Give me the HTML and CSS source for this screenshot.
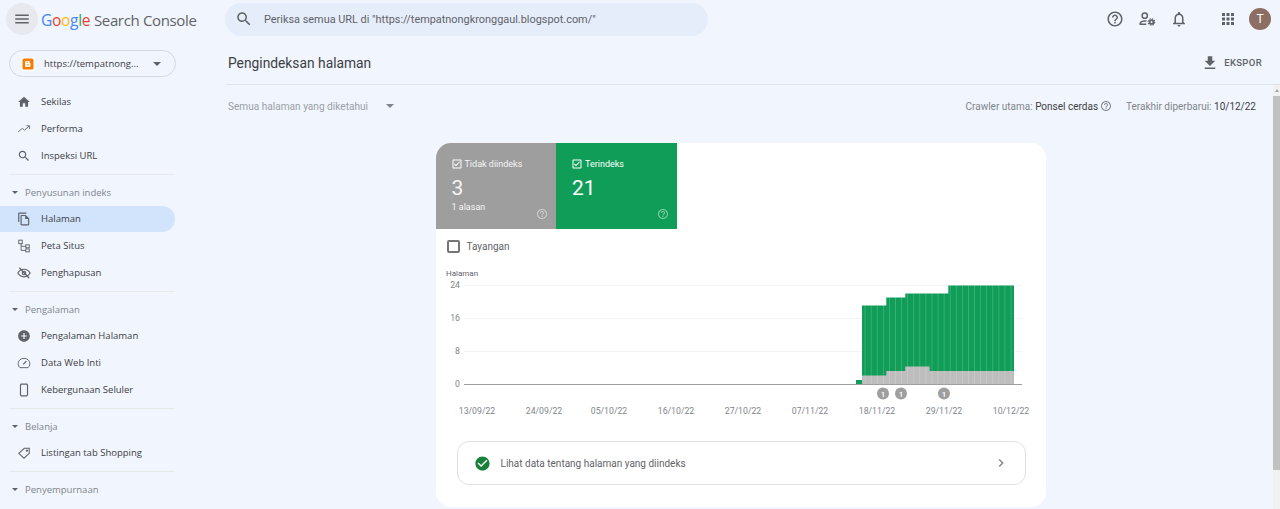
FILE: index.html
```html
<!DOCTYPE html>
<html lang="id">
<head>
    <meta charset="UTF-8">
    <meta name="viewport" content="width=device-width, initial-scale=1.0">
    <title>Pengindeksan halaman - Search Console</title>
    <link rel="stylesheet" href="styles.css">
</head>
<body>
    <svg class="defs" width="0" height="0">
        <symbol id="help" viewBox="0 0 24 24"><path d="M11 18h2v-2h-2v2zm1-16C6.48 2 2 6.48 2 12s4.48 10 10 10 10-4.48 10-10S17.52 2 12 2zm0 18c-4.41 0-8-3.59-8-8s3.59-8 8-8 8 3.59 8 8-3.59 8-8 8zm0-14c-2.21 0-4 1.79-4 4h2c0-1.1.9-2 2-2s2 .9 2 2c0 2-3 1.75-3 5h2c0-2.25 3-2.5 3-5 0-2.21-1.79-4-4-4z"/></symbol>
        <symbol id="tick" viewBox="0 0 24 24"><path d="M19 3H5c-1.1 0-2 .9-2 2v14c0 1.1.9 2 2 2h14c1.1 0 2-.9 2-2V5c0-1.1-.9-2-2-2zm0 16H5V5h14v14z"/><path d="M10 16.4l-4-4 1.4-1.4 2.6 2.6 6.6-6.6L18 8z"/></symbol>
    </svg>

    <header class="topbar">
        <div class="menu-btn">
            <svg class="icon-18" viewBox="0 0 24 24"><path d="M3 18h18v-2H3v2zm0-5h18v-2H3v2zm0-7v2h18V6H3z"/></svg>
        </div>
        <div class="logo">
            <span class="g-blue">G</span><span class="g-red">o</span><span class="g-yellow">o</span><span class="g-blue">g</span><span class="g-green">l</span><span class="g-red">e</span>
            <span class="logo-name">Search Console</span>
        </div>
        <div class="search">
            <svg class="icon-18" viewBox="0 0 24 24"><path d="M15.5 14h-.79l-.28-.27C15.41 12.59 16 11.11 16 9.5 16 5.91 13.09 3 9.5 3S3 5.91 3 9.5 5.91 16 9.5 16c1.61 0 3.09-.59 4.23-1.57l.27.28v.79l5 4.99L20.49 19l-4.99-5zm-6 0C7.01 14 5 11.99 5 9.5S7.01 5 9.5 5 14 7.01 14 9.5 11.99 14 9.5 14z"/></svg>
            <span>Periksa semua URL di "https://tempatnongkronggaul.blogspot.com/"</span>
        </div>
        <div class="top-icons">
            <svg class="icon-18" viewBox="0 0 24 24"><use href="#help"/></svg>
            <svg class="icon-18" viewBox="0 0 24 24"><circle cx="9" cy="7.5" r="3.5" fill="none" stroke="#5f6368" stroke-width="2"/><path d="M2 20v-2c0-3 4-4.500 7-4.500 1 0 2 .1 2.800.4l-.8 1.800c-.6-.1-1.300-.2-2-.2-2.500 0-5 .9-5 2.500h7v2z"/><circle cx="18" cy="16" r="2.600" fill="none" stroke="#5f6368" stroke-width="2.400"/><circle cx="18" cy="16" r="4.400" fill="none" stroke="#5f6368" stroke-width="1.400" stroke-dasharray="2 1.450"/></svg>
            <svg class="icon-18" viewBox="0 0 24 24"><path d="M12 22c1.100 0 2-.9 2-2h-4c0 1.100.9 2 2 2zm6-6v-5c0-3.070-1.630-5.640-4.500-6.320V4c0-.83-.67-1.500-1.500-1.500s-1.500.67-1.500 1.500v.68C7.640 5.360 6 7.920 6 11v5l-2 2v1h16v-1l-2-2zm-2 1H8v-6c0-2.480 1.510-4.500 4-4.500s4 2.020 4 4.500v6z"/></svg>
            <svg class="icon-18 apps" viewBox="0 0 24 24"><path d="M4 8h4V4H4v4zm6 12h4v-4h-4v4zm-6 0h4v-4H4v4zm0-6h4v-4H4v4zm6 0h4v-4h-4v4zm6-10v4h4V4h-4zm-6 4h4V4h-4v4zm6 6h4v-4h-4v4zm0 6h4v-4h-4v4z"/></svg>
            <div class="avatar">T</div>
        </div>
    </header>

    <div class="layout">
        <nav class="sidebar">
            <div class="property">
                <span class="blogger">
                    <svg viewBox="0 0 14 14"><rect x="1.500" y="1.500" width="11" height="11" rx="1.500" fill="#f57d00"/><path d="M5.200 4h2.300c.8 0 1.300.6 1.300 1.300v.7c.5 0 .7.300.7.600v1.800c0 .9-.6 1.600-1.500 1.600H5.200c-.6 0-1-.5-1-1V5c0-.6.4-1 1-1z" fill="#fff"/><path d="M5.700 5.400h1.500M5.700 7.900h2.500" stroke="#f57d00" stroke-width=".8"/></svg>
                </span>
                <span class="property-url">https://tempatnong...</span>
                <span class="caret"></span>
            </div>

            <a class="nav-item">
                <svg class="icon-14" viewBox="0 0 24 24"><path d="M10 20v-6h4v6h5v-8h3L12 3 2 12h3v8z"/></svg>Sekilas
            </a>
            <a class="nav-item">
                <svg class="icon-14" viewBox="0 0 24 24"><path d="M2 17l7-6 4 3 8-7M16 6.500h5.500V12" fill="none" stroke="#5f6368" stroke-width="1.500"/></svg>Performa
            </a>
            <a class="nav-item">
                <svg class="icon-14" viewBox="0 0 24 24"><path d="M15.500 14h-.79l-.28-.27C15.410 12.590 16 11.110 16 9.500 16 5.910 13.090 3 9.500 3S3 5.910 3 9.500 5.910 16 9.500 16c1.610 0 3.090-.59 4.230-1.570l.27.28v.79l5 4.990L20.490 19l-4.990-5zm-6 0C7.010 14 5 11.990 5 9.500S7.010 5 9.500 5 14 7.010 14 9.500 11.990 14 9.500 14z"/></svg>Inspeksi URL
            </a>
            <hr class="nav-line">

            <div class="nav-head"><span class="caret small"></span>Penyusunan indeks</div>
            <a class="nav-item active">
                <svg class="icon-14" viewBox="0 0 24 24"><path d="M16 1H4c-1.100 0-2 .9-2 2v14h2V3h12V1zm-1 4H8c-1.100 0-1.990.9-1.990 2L6 21c0 1.100.89 2 1.990 2H19c1.100 0 2-.9 2-2V11l-6-6zM8 21V7h6v5h5v9H8z"/></svg>Halaman
            </a>
            <a class="nav-item">
                <svg class="icon-14 line" viewBox="0 0 24 24" stroke="#5f6368" stroke-width="1.600"><rect x="3" y="2" width="6" height="6"/><rect x="15" y="10" width="6" height="5"/><rect x="15" y="17" width="6" height="5"/><path d="M7 8v11.500h8M7 12.500h8"/></svg>Peta Situs
            </a>
            <a class="nav-item">
                <svg class="icon-14 line" viewBox="0 0 24 24" stroke="#5f6368" stroke-width="2"><path d="M1.500 12C4 7.500 8 5.500 12 5.500s8 2 10.500 6.500C20 16.500 16 18.500 12 18.500S4 16.500 1.500 12z"/><circle cx="12" cy="12" r="3"/><path d="M4 3l17 18"/></svg>Penghapusan
            </a>
            <hr class="nav-line">

            <div class="nav-head"><span class="caret small"></span>Pengalaman</div>
            <a class="nav-item">
                <svg class="icon-14" viewBox="0 0 24 24"><path d="M12 2C6.480 2 2 6.480 2 12s4.480 10 10 10 10-4.480 10-10S17.520 2 12 2zm5 11h-4v4h-2v-4H7v-2h4V7h2v4h4v2z"/></svg>Pengalaman Halaman
            </a>
            <a class="nav-item">
                <svg class="icon-14 line" viewBox="0 0 24 24" stroke="#5f6368" stroke-width="1.600"><path d="M5 20h14c1.500-1.500 3-3.500 3-7 0-5.500-4.500-9-10-9S2 7.500 2 13c0 3.500 1.500 5.500 3 7z"/><path d="M10.500 14.500L16 9" stroke-width="2"/></svg>Data Web Inti
            </a>
            <a class="nav-item">
                <svg class="icon-14 line" viewBox="0 0 24 24" stroke="#5f6368" stroke-width="2"><rect x="6" y="2" width="12" height="20" rx="1.500"/></svg>Kebergunaan Seluler
            </a>
            <hr class="nav-line">

            <div class="nav-head"><span class="caret small"></span>Belanja</div>
            <a class="nav-item">
                <svg class="icon-14 line" viewBox="0 0 24 24" stroke="#5f6368" stroke-width="1.800"><path d="M3 12.500L12.500 4H21v8.500L12 21z"/><circle cx="17" cy="8" r="1" fill="#5f6368"/></svg>Listingan tab Shopping
            </a>
            <hr class="nav-line">

            <div class="nav-head"><span class="caret small"></span>Penyempurnaan</div>
        </nav>

        <main class="main">
            <div class="page-head">
                <h1>Pengindeksan halaman</h1>
                <div class="export">
                    <svg class="icon-18" viewBox="0 0 24 24"><path d="M19 9h-4V3H9v6H5l7 7 7-7zM5 18v2h14v-2H5z"/></svg>
                    EKSPOR
                </div>
            </div>

            <div class="content">
                <div class="filter-row">
                    <div class="filter">Semua halaman yang diketahui<span class="caret"></span></div>
                    <div class="meta">
                        <span>Crawler utama: <b>Ponsel cerdas</b></span>
                        <svg class="icon-12" viewBox="0 0 24 24"><use href="#help"/></svg>
                        <span class="updated">Terakhir diperbarui: <b>10/12/22</b></span>
                    </div>
                </div>

                <section class="card">
                    <div class="tiles">
                        <div class="tile grey">
                            <div class="tile-label"><svg viewBox="0 0 24 24"><use href="#tick"/></svg>Tidak diindeks</div>
                            <div class="tile-num">3</div>
                            <div class="tile-sub">1 alasan</div>
                            <svg class="tile-help" viewBox="0 0 24 24"><use href="#help"/></svg>
                        </div>
                        <div class="tile green">
                            <div class="tile-label"><svg viewBox="0 0 24 24"><use href="#tick"/></svg>Terindeks</div>
                            <div class="tile-num">21</div>
                            <svg class="tile-help" viewBox="0 0 24 24"><use href="#help"/></svg>
                        </div>
                    </div>

                    <label class="impressions"><span class="box"></span>Tayangan</label>

                    <svg class="chart" width="590" height="160" viewBox="0 0 590 160">
                        <defs>
                            <pattern id="seams" x="0" y="0" width="6.08" height="10" patternUnits="userSpaceOnUse">
                                <rect x="5.500" width=".6" height="10" fill="#fff" fill-opacity=".28"/>
                            </pattern>
                        </defs>
                        <text class="axis-title" x="0" y="11">Halaman</text>
                        <g class="grid">
                            <line x1="18" x2="576" y1="20.500" y2="20.500"/>
                            <line x1="18" x2="576" y1="53.500" y2="53.500"/>
                            <line x1="18" x2="576" y1="86.500" y2="86.500"/>
                        </g>
                        <g class="y-labels">
                            <text x="14" y="23">24</text>
                            <text x="14" y="56">16</text>
                            <text x="14" y="89">8</text>
                            <text x="14" y="122">0</text>
                        </g>
                        <rect x="410" y="115" width="6" height="4" fill="#0f9d58"/>
                        <path d="M416 119V40.500h24.300V32.500h19V28.500h43V20.500H568V119z" fill="#0f9d58"/>
                        <path d="M416 119V110.500h24.300V106h19V101.500h24.300V106H568V119z" fill="#bdbdbd"/>
                        <rect x="416" y="20" width="152" height="99" fill="url(#seams)"/>
                        <line class="baseline" x1="18" x2="576" y1="119.500" y2="119.500"/>
                        <g class="badges">
                            <circle cx="437" cy="128.500" r="6"/><text x="437" y="131.500">1</text>
                            <circle cx="455" cy="128.500" r="6"/><text x="455" y="131.500">1</text>
                            <circle cx="498" cy="128.500" r="6"/><text x="498" y="131.500">1</text>
                        </g>
                        <g class="x-labels">
                            <text x="31" y="149">13/09/22</text>
                            <text x="98" y="149">24/09/22</text>
                            <text x="163" y="149">05/10/22</text>
                            <text x="230" y="149">16/10/22</text>
                            <text x="297" y="149">27/10/22</text>
                            <text x="364" y="149">07/11/22</text>
                            <text x="431" y="149">18/11/22</text>
                            <text x="498" y="149">29/11/22</text>
                            <text x="565" y="149">10/12/22</text>
                        </g>
                    </svg>

                    <div class="link-box">
                        <svg class="check" viewBox="0 0 24 24"><circle cx="12" cy="12" r="8" fill="#fff"/><path d="M12 2C6.480 2 2 6.480 2 12s4.480 10 10 10 10-4.480 10-10S17.520 2 12 2zm-2 15l-5-5 1.410-1.410L10 14.170l7.590-7.590L19 8l-9 9z"/></svg>
                        <span>Lihat data tentang halaman yang diindeks</span>
                        <svg class="icon-16 chevron" viewBox="0 0 24 24"><path d="M10 6L8.590 7.410 13.170 12l-4.580 4.590L10 18l6-6z"/></svg>
                    </div>
                </section>
            </div>

            <div class="scrollbar">
                <span class="arrow"></span>
                <span class="thumb"></span>
            </div>
        </main>
    </div>
</body>
</html>
```

FILE: styles.css
```css
html, body {
    margin: 0;
    height: 509px;
    overflow: hidden;
}
body {
    background: #f1f5fd;
    font-family: Roboto, "Liberation Sans", sans-serif;
    color: #3c4043;
}
svg {
    fill: #5f6368;
    flex: none;
}
svg.line {
    fill: none;
}
.defs {
    position: absolute;
}
.icon-12 { width: 12px; height: 12px; }
.icon-14 { width: 14px; height: 14px; }
.icon-16 { width: 16px; height: 16px; }
.icon-18 { width: 18px; height: 18px; }

/* top bar */
.topbar {
    display: flex;
    align-items: center;
    height: 38px;
    padding: 0 9px 0 6px;
}
.menu-btn {
    width: 32px;
    height: 32px;
    border-radius: 50%;
    background: #e7e9ee;
    display: flex;
    align-items: center;
    justify-content: center;
}
.logo {
    margin-left: 3px;
    padding-top: 1px;
    width: 184px;
    font-family: "Open Sans", sans-serif;
    font-size: 15.5px;
    white-space: nowrap;
    letter-spacing: -.3px;
}
.logo-name {
    color: #5f6368;
    font-size: 15px;
    letter-spacing: -.35px;
}
.g-blue { color: #4285f4; }
.g-red { color: #ea4335; }
.g-yellow { color: #fbbc05; }
.g-green { color: #34a853; }
.search {
    width: 483px;
    height: 33px;
    border-radius: 17px;
    background: #e6edfa;
    display: flex;
    align-items: center;
    gap: 11px;
    padding-left: 10px;
    box-sizing: border-box;
    font-size: 10.900px;
    color: #5f6368;
}
.top-icons {
    margin-left: auto;
    display: flex;
    align-items: center;
    gap: 14px;
}
.apps { margin-left: 17px; }
.avatar {
    width: 22px;
    height: 22px;
    margin-left: -2px;
    border-radius: 50%;
    background: #8d6e63;
    color: #fff;
    font-size: 12px;
    display: flex;
    align-items: center;
    justify-content: center;
}

/* sidebar */
.layout {
    display: flex;
    height: 471px;
}
.sidebar {
    width: 208px;
    flex: none;
    padding-top: 12px;
    font-family: "Open Sans", sans-serif;
    font-size: 9.500px;
    font-weight: 500;
    color: #5f6368;
}
.property {
    margin: 0 32px 11.600px 9px;
    height: 27px;
    border: 1px solid #d5d8dd;
    border-radius: 14px;
    display: flex;
    align-items: center;
    padding-left: 11px;
    box-sizing: border-box;
}
.blogger {
    width: 14px;
    height: 14px;
    background: #fff;
    margin-right: 9px;
    display: flex;
}
.property-url {
    width: 109px;
    color: #3c4043;
    white-space: nowrap;
}
.caret {
    display: inline-block;
    width: 0;
    height: 0;
    border-left: 4px solid transparent;
    border-right: 4px solid transparent;
    border-top: 4px solid #5f6368;
}
.caret.small {
    border-width: 3px 3px 0;
    margin-right: 7px;
}
.nav-item {
    display: flex;
    align-items: center;
    gap: 10px;
    height: 26.800px;
    padding-left: 17px;
    margin-right: 33px;
    color: #3c4043;
    border-radius: 0 14px 14px 0;
}
.nav-item.active {
    background: #d2e3fc;
}
.nav-head {
    display: flex;
    align-items: center;
    height: 26.800px;
    padding-left: 12px;
    color: #80868b;
    font-weight: 400;
}
.nav-line {
    margin: 5px 33px 3.800px 9px;
    border: 0;
    height: 1px;
    background: #e6e8ec;
}

/* main */
.main {
    flex: 1;
    position: relative;
    min-width: 0;
}
.page-head {
    display: flex;
    align-items: center;
    justify-content: space-between;
    height: 43px;
    margin-left: 18px;
    padding: 3px 18px 0 2px;
    border-bottom: 1px solid #e0e3e8;
}
h1 {
    margin: 0;
    font-size: 13.800px;
    font-weight: 400;
    color: #3c4043;
}
.export {
    display: flex;
    align-items: center;
    gap: 5px;
    font-size: 9.500px;
    font-weight: 500;
    letter-spacing: .35px;
    color: #5f6368;
}
.content {
    padding-right: 7px;
}
.filter-row {
    display: flex;
    justify-content: space-between;
    align-items: center;
    height: 42px;
    margin: 0 17px 16px 20px;
    font-size: 10px;
    color: #9aa0a6;
}
.filter {
    display: flex;
    align-items: center;
    gap: 18px;
    font-size: 10.100px;
}
.filter .caret { border-top-color: #80868b; }
.meta {
    display: flex;
    align-items: center;
    gap: 2px;
    color: #80868b;
}
.meta svg { fill: #80868b; }
.meta b {
    font-weight: 400;
    color: #3c4043;
}
.updated { margin-left: 12px; }

/* card */
.card {
    width: 610px;
    height: 364px;
    margin: 0 auto;
    background: #fff;
    border-radius: 15px;
}
.tiles {
    display: flex;
    height: 85.500px;
}
.tile {
    width: 120.500px;
    position: relative;
    padding: 15px 0 0 16px;
    box-sizing: border-box;
    color: #fff;
}
.tile.grey {
    background: #9e9e9e;
    border-top-left-radius: 15px;
    color: #f5f5f5;
}
.tile.green { background: #0f9d58; }
.tile-label {
    display: flex;
    align-items: center;
    gap: 2px;
    font-size: 9px;
    line-height: 12px;
}
.tile-label svg {
    width: 12px;
    height: 12px;
    margin-left: -1px;
    fill: #fff;
}
.tile-num {
    font-size: 21px;
    line-height: 24px;
    margin-top: 6px;
}
.tile-sub {
    font-size: 9px;
    line-height: 12px;
    margin-top: 1px;
}
.tile-help {
    position: absolute;
    right: 8px;
    bottom: 9px;
    width: 12px;
    height: 12px;
    fill: #fff;
    opacity: .5;
}
.impressions {
    display: flex;
    align-items: center;
    gap: 7px;
    height: 35px;
    padding-left: 11px;
    font-size: 10px;
    color: #5f6368;
}
.box {
    width: 13px;
    height: 13px;
    box-sizing: border-box;
    border: 2px solid #757575;
    border-radius: 2px;
}
.chart {
    display: block;
    margin: 1px 0 0 10px;
    font-family: Roboto, sans-serif;
    font-size: 8.700px;
    fill: #80868b;
}
.axis-title { fill: #5f6368; font-size: 8px; }
.grid line { stroke: #f1f3f4; stroke-width: 1; }
.baseline { stroke: #9e9e9e; stroke-width: 1; }
.y-labels text { text-anchor: end; }
.x-labels text { text-anchor: middle; }
.badges circle { fill: #9e9e9e; }
.badges text {
    fill: #fff;
    text-anchor: middle;
    font-size: 8px;
    font-weight: 500;
}
.link-box {
    display: flex;
    align-items: center;
    margin: 16px 20px 0 21px;
    height: 44px;
    border: 1px solid #e0e0e0;
    border-radius: 12px;
    box-sizing: border-box;
    padding: 1px 16px 0;
    font-size: 10px;
    color: #5f6368;
}
.check {
    width: 17px;
    height: 17px;
    fill: #188038;
    margin-right: 10px;
}
.chevron {
    margin-left: auto;
    fill: #80868b;
}

/* scrollbar */
.scrollbar {
    position: absolute;
    top: 47px;
    right: 0;
    bottom: 0;
    width: 7px;
    background: #f1f1f1;
}
.arrow {
    display: block;
    margin: 4px auto 0;
    width: 0;
    border-left: 2.500px solid transparent;
    border-right: 2.500px solid transparent;
    border-bottom: 3px solid #a3a3a3;
}
.thumb {
    display: block;
    margin-top: 4px;
    height: 374px;
    background: #c1c1c1;
}
```
